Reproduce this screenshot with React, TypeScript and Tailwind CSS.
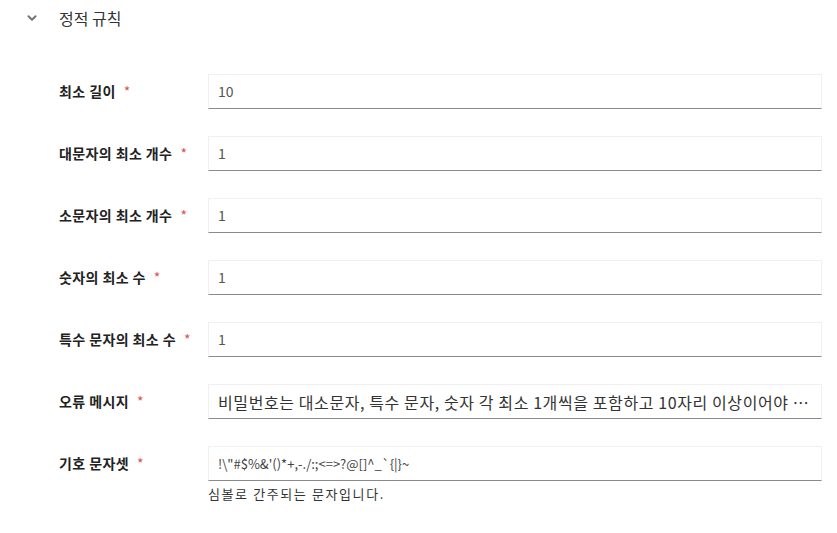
import { ChevronDown } from "lucide-react";

const rows = [
  { label: "최소 길이", value: "10" },
  { label: "대문자의 최소 개수", value: "1" },
  { label: "소문자의 최소 개수", value: "1" },
  { label: "숫자의 최소 수", value: "1" },
  { label: "특수 문자의 최소 수", value: "1" },
  {
    label: "오류 메시지",
    value: "비밀번호는 대소문자, 특수 문자, 숫자 각 최소 1개씩을 포함하고 10자리 이상이어야 합니다.",
    wide: true,
  },
];

function Field({ value, wide }: { value: string; wide?: boolean }) {
  return (
    <div className="w-[614px] h-[35px] flex items-center px-[9px] bg-white border border-[#f0f0f0] border-b-[#8a8a8a]">
      <span
        className={
          wide
            ? "truncate text-[16px] tracking-[0.6px] text-[#333]"
            : "truncate text-[14px] text-[#555]"
        }
      >
        {value}
      </span>
    </div>
  );
}

export default function App() {
  return (
    <div
      className="w-[837px] h-[533px] bg-white text-[#333] overflow-hidden"
      style={{ fontFamily: '"Noto Sans CJK KR", "Noto Sans", sans-serif' }}
    >
      {/* Section header */}
      <div className="flex items-center h-[36px] pl-[25px]">
        <ChevronDown className="w-[14px] h-[14px] text-[#777]" strokeWidth={3.5} />
        <span className="ml-[20px] text-[16px] text-[#333]">정적 규칙</span>
      </div>

      <div className="flex flex-col gap-[27px] pl-[59px] pt-[38px]">
        {rows.map((r) => (
          <div key={r.label} className="flex items-center">
            <div className="w-[149px] text-[14px] tracking-[0.4px] font-semibold text-[#222]">
              {r.label}
              <span className="ml-[8px] text-[#d9534f] font-normal">*</span>
            </div>
            <Field value={r.value} wide={r.wide} />
          </div>
        ))}

        <div className="flex items-start">
          <div className="w-[149px] h-[35px] flex items-center text-[14px] tracking-[0.4px] font-semibold text-[#222]">
            기호 문자셋
            <span className="ml-[8px] text-[#d9534f] font-normal">*</span>
          </div>
          <div className="flex flex-col">
            <div className="w-[614px] h-[35px] flex items-center px-[9px] bg-white border border-[#f0f0f0] border-b-[#8a8a8a]">
              <span className="text-[13px] text-[#444]">{"!\\\"#$%&'()*+,-./:;<=>?@[]^_`{|}~"}</span>
            </div>
            <span className="mt-[3px] text-[13px] tracking-[1.6px] text-[#333]">심볼로 간주되는 문자입니다.</span>
          </div>
        </div>
      </div>
    </div>
  );
}
